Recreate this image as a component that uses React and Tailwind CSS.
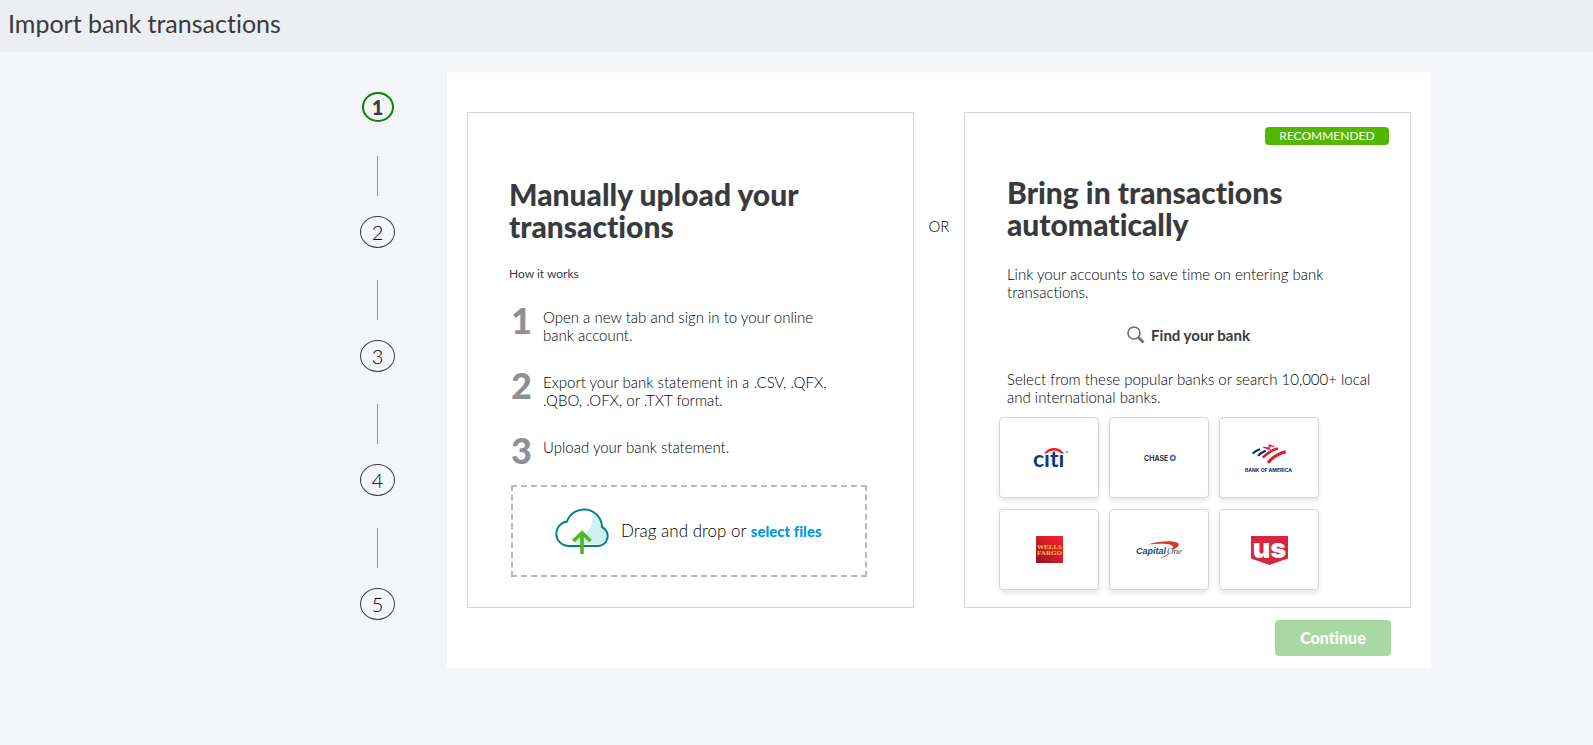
import { useState } from 'react'

const steps = [1, 2, 3, 4, 5]

const instructions = [
  'Open a new tab and sign in to your online bank account.',
  'Export your bank statement in a .CSV, .QFX, .QBO, .OFX, or .TXT format.',
  'Upload your bank statement.'
]

const CitiLogo = () => (
  <svg width="36" height="24" viewBox="0 0 36 24" className="overflow-visible">
    <text x="2" y="21" fontFamily="Lato, sans-serif" fontWeight="700" fontSize="23" fill="#0a3a82">cıtı</text>
    <path d="M13 7.500C18 0.200 28 0.200 33 7.500L30.500 7.500C26 3.600 20 3.600 15.500 7.500Z" fill="#ee1c25" />
    <circle cx="36" cy="6" r="1" fill="#6f8fbd" />
  </svg>
)

const ChaseLogo = () => (
  <svg width="33" height="8" viewBox="0 0 33 8" className="overflow-visible">
    <text x="1" y="6.500" fontFamily="Inter, sans-serif" fontWeight="600" fontSize="7" fill="#111">CHASE</text>
    <path d="M28.800 1.700H30.800L32 2.900V5L30.800 6.200H28.800L27.600 5V2.900Z" fill="none" stroke="#3f74d1" strokeWidth="1.700" />
  </svg>
)

const BankOfAmericaLogo = () => (
  <svg width="50" height="30" viewBox="0 0 50 30" className="overflow-visible">
    <g fill="none" strokeWidth="2.200">
      <path d="M8.700 10.500Q12 7.500 16 6.300" stroke="#0b2a6f" />
      <path d="M14 12.800Q17.500 9.300 21.700 7.800" stroke="#0b2a6f" />
      <path d="M19.300 4.300Q23 4.600 26.700 6.500M24.500 2.200Q27.500 2.300 30.500 4M22.500 5.800L27 3" stroke="#e31837" strokeWidth="1.400" />
      <path d="M18.700 14.600Q25.500 7.500 34 5.600" stroke="#e31837" strokeWidth="2.600" />
      <path d="M24 19.700Q31 11.500 41.700 8.800" stroke="#e31837" strokeWidth="3.200" />
    </g>
    <text x="1" y="29" fontFamily="Inter, sans-serif" fontWeight="700" fontSize="5" fill="#0b2a6f">BANK OF AMERICA</text>
  </svg>
)

const WellsFargoLogo = () => (
  <svg width="27" height="27" viewBox="0 0 27 27">
    <defs>
      <linearGradient id="wells" x1="0" y1="1" x2="1" y2="0">
        <stop offset="0" stopColor="#8e1526" />
        <stop offset="0.600" stopColor="#dc1d2d" />
        <stop offset="1" stopColor="#ee2030" />
      </linearGradient>
    </defs>
    <rect width="27" height="27" fill="url(#wells)" />
    <g fontFamily="Liberation Serif, serif" fontWeight="700" fontSize="7" fill="#fdc82f" textAnchor="middle">
      <text x="13.500" y="12.500">WELLS</text>
      <text x="13.500" y="19">FARGO</text>
    </g>
  </svg>
)

const CapitalOneLogo = () => (
  <svg width="45" height="18" viewBox="0 0 45 18" className="overflow-visible">
    <path d="M11 3.500C22 0 36 -0.800 41 2C44 4 39 8 35 9C37 6 36 4 31 3.200C25 2.500 18 2.800 11 3.500Z" fill="#d8382f" />
    <path d="M23 17C27 15.800 31 13.500 33 11.500C31 14.500 27 17 23 17Z" fill="#d8382f" />
    <text x="-1" y="12.500" fontFamily="Liberation Sans, sans-serif" fontWeight="700" fontStyle="italic" fontSize="9" fill="#0f5078">Capital</text>
    <text x="30" y="13" fontFamily="Liberation Serif, serif" fontStyle="italic" fontSize="9" fill="#0f5078">One</text>
  </svg>
)

const UsBankLogo = () => (
  <svg width="37" height="27" viewBox="0 0 37 27" className="overflow-visible">
    <path d="M0 0H37V22.500L18.500 29L0 22.500Z" fill="#d9253f" />
    <text x="18.500" y="21.500" fontFamily="Inter, sans-serif" fontWeight="900" fontSize="27" fill="#fff" textAnchor="middle">us</text>
  </svg>
)

const banks = [
  { name: 'Citi', Logo: CitiLogo },
  { name: 'Chase', Logo: ChaseLogo },
  { name: 'Bank of America', Logo: BankOfAmericaLogo },
  { name: 'Wells Fargo', Logo: WellsFargoLogo },
  { name: 'Capital One', Logo: CapitalOneLogo },
  { name: 'US Bank', Logo: UsBankLogo }
]

const CloudIcon = () => (
  <svg width="54" height="48" viewBox="0 0 54 48" fill="none" aria-hidden="true">
    <path d="M37 5C42 8 45 13 46 20.500C50 22 52 25 51.500 29C51 34 47 37 43 37H21C18 35 16 32 15 30C27 33 41 22 37 5Z" fill="#cdf2f1" />
    <path d="M13.500 39H43A10 10 0 0 0 47 20A18 18 0 0 0 12 14.500A12.300 12.300 0 0 0 13.500 39Z" stroke="#008481" strokeWidth="2" />
    <path d="M27 47V26M18.500 34L27 25.800L35.500 34" stroke="#53b71f" strokeWidth="3.600" />
  </svg>
)

const SearchIcon = () => (
  <svg width="18" height="18" viewBox="0 0 18 18" fill="none" stroke="#6b6c72" aria-hidden="true">
    <circle cx="7" cy="7" r="6" strokeWidth="1.600" />
    <path d="M11.500 11.500L16.500 16.500" strokeWidth="2.600" />
  </svg>
)

const Stepper = ({ current }) => (
  <ol className="flex flex-col pt-5">
    {steps.map((step, index) => (
      <li
        key={step}
        className={`flex w-[35px] flex-col items-center justify-between ${index < steps.length - 1 ? 'h-[124px] pb-5' : ''}`}
      >
        {step === current ? (
          <span className="flex h-[30px] w-8 items-center justify-center rounded-[50%] border-2 border-[#108000] text-xl font-black">{step}</span>
        ) : (
          <span className="flex h-8 w-[35px] items-center justify-center rounded-[50%] border border-[#393a3d] text-xl font-light text-black">{step}</span>
        )}
        {index < steps.length - 1 && <span className="h-10 w-px bg-[#8d9096]" />}
      </li>
    ))}
  </ol>
)

const ManualUpload = () => (
  <section className="border border-[#d4d7dc] px-[41px] pt-[65px] pb-[30px]">
    <h2 className="max-w-[320px] text-3xl leading-8 font-black">Manually upload your transactions</h2>
    <p className="mt-[23px] text-xs leading-[18px]">How it works</p>
    <ol className="mt-[19px] flex flex-col gap-[23px]">
      {instructions.map((text, index) => (
        <li key={text} className="flex items-start">
          <span className="w-[34px] shrink-0 pl-0.5 text-4xl leading-9 font-black text-[#8d9096]">{index + 1}</span>
          <span className="max-w-[290px] pt-1.5 text-[15px] leading-[18px] font-light text-black">{text}</span>
        </li>
      ))}
    </ol>
    <div className="mt-[17px] mr-[5px] ml-0.5 flex h-[92px] items-center border-2 border-dashed border-[#b8b8b8] pl-[42px]">
      <CloudIcon />
      <p className="ml-3 text-[17px] font-light text-black">
        Drag and drop or <a href="#select-files" className="text-[15px] font-black text-[#0097e6]">select files</a>
      </p>
    </div>
  </section>
)

const AutomaticImport = () => (
  <section className="border border-[#d4d7dc] pt-3.5 pr-8 pb-4 pl-[42px]">
    <div className="-mr-[11px] flex justify-end">
      <span className="w-[124px] rounded bg-[#53b700] text-center text-xs leading-[18px] text-white">RECOMMENDED</span>
    </div>
    <h2 className="mt-[31px] max-w-[320px] text-3xl leading-8 font-black">Bring in transactions automatically</h2>
    <p className="mt-[25px] max-w-[360px] text-[15px] leading-[18px] font-light text-black">Link your accounts to save time on entering bank transactions.</p>
    <div className="mt-6 flex justify-center pr-2">
      <button type="button" className="flex items-center gap-1.5 text-[15px] leading-5 font-bold">
        <SearchIcon />
        Find your bank
      </button>
    </div>
    <p className="mt-[25px] text-[15px] leading-[18px] font-light text-black">Select from these popular banks or search 10,000+ local and international banks.</p>
    <div className="mt-[11px] -ml-2 grid grid-cols-[repeat(3,100px)] gap-x-2.5 gap-y-[11px]">
      {banks.map(({ name, Logo }) => (
        <button
          key={name}
          type="button"
          aria-label={name}
          className="flex h-[81px] items-center justify-center rounded border border-[#d4d7dc] bg-white shadow-[0_3px_5px_rgba(0,0,0,0.1)]"
        >
          <Logo />
        </button>
      ))}
    </div>
  </section>
)

export default function App() {
  const [current] = useState(1)

  return (
    <div className="min-h-screen bg-[#f4f5f9] font-['Lato',sans-serif] text-[#393a3d] [font-variant-ligatures:none]">
      <header className="flex h-[52px] items-center bg-[#eceef1] px-2 pb-1">
        <h1 className="text-[25px]">Import bank transactions</h1>
      </header>
      <div className="mx-auto flex max-w-[1269px] justify-end pt-5 pb-8">
        <Stepper current={current} />
        <main className="ml-[52px] w-full max-w-[984px] bg-white px-5 pt-10 pb-3">
          <div className="grid grid-cols-[1fr_50px_1fr]">
            <ManualUpload />
            <div className="pt-[105px] text-center text-[15px] leading-[18px] font-light text-black">OR</div>
            <AutomaticImport />
          </div>
          <div className="mt-3 mr-5 flex justify-end">
            <button type="button" disabled className="h-9 w-[116px] rounded bg-[#a9d9a3] text-base font-black text-white">
              Continue
            </button>
          </div>
        </main>
      </div>
    </div>
  )
}
